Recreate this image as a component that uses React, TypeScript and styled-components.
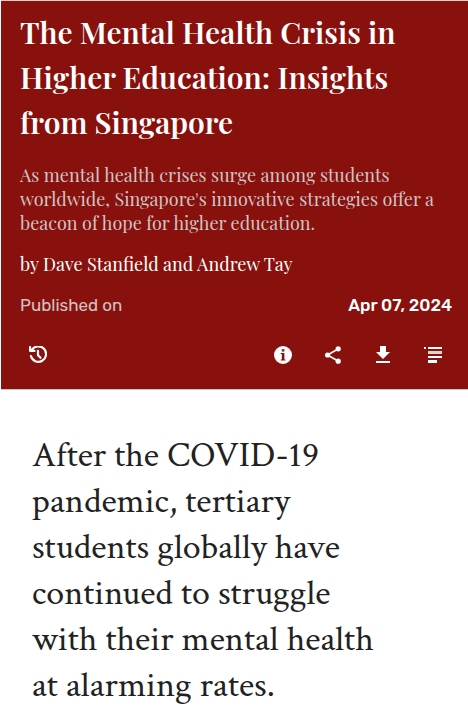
import React from 'react';
import styled, { createGlobalStyle } from 'styled-components';

const GlobalStyle = createGlobalStyle`
  *, *::before, *::after { box-sizing: border-box; }
  body { margin: 0; background: #ffffff; }
`;

const display = `'Playfair Display', 'Liberation Serif', serif`;
const sans = `Rubik, Roboto, sans-serif`;

const Page = styled.main`
  padding-left: 1px;
`;

const Header = styled.header`
  display: flex;
  flex-direction: column;
  padding: 9px 16px 14px 19px;
  border-top: 1px solid #d9d0d0;
  border-bottom: 1px solid #d0c4c4;
  background: #88110d;
  color: #ffffff;
`;

const Title = styled.h1`
  margin: 0;
  font: 600 30px/45px ${display};
`;

const Summary = styled.p`
  margin: 18px 0 0;
  color: #cfc4c4;
  font: 400 18px/24px ${display};
`;

const Byline = styled.p`
  margin: 17px 0 0;
  font: 400 18px/24px ${display};
`;

const Published = styled.div`
  display: flex;
  justify-content: space-between;
  margin-top: 17px;
  font: 400 17px/24px ${sans};
`;

const Label = styled.span`
  color: #cfc4c4;
`;

const PublishDate = styled.time`
  font-weight: 500;
`;

const Toolbar = styled.nav`
  display: flex;
  justify-content: space-between;
  margin: 18px -1px 0 -2px;
`;

const Actions = styled.div`
  display: flex;
  gap: 10px;
`;

const IconButton = styled.button`
  display: grid;
  place-items: center;
  width: 40px;
  height: 40px;
  padding: 0;
  border: 0;
  border-radius: 3px;
  background: transparent;
  color: #ffffff;
  cursor: pointer;
`;

const Icon = styled.svg`
  display: block;
  width: 18px;
  height: 18px;
  fill: currentColor;
`;

const Article = styled.article`
  padding: 43px 31px 0;
`;

const Lead = styled.p`
  margin: 0;
  color: #222222;
  font: 400 36px/46px 'Crimson Text', 'Liberation Serif', serif;
`;

const HistoryIcon = () => (
  <Icon viewBox="0 0 18 18" aria-hidden="true">
    <path d="M2.6 4.4A7.7 7.7 0 1 1 1.9 10" fill="none" stroke="currentColor" strokeWidth="2.2" strokeLinecap="round" />
    <path d="M0 1.2a1.1 1.1 0 0 1 2.2 0v2.6h3.2a1.1 1.1 0 0 1 0 2.3H1.1A1.1 1.1 0 0 1 0 5z" />
    <path d="M9 4.8v4.4l2.5 2.6" fill="none" stroke="currentColor" strokeWidth="2.2" strokeLinecap="round" />
  </Icon>
);

const InfoIcon = () => (
  <Icon viewBox="0 0 18 18" aria-hidden="true">
    <path
      fillRule="evenodd"
      d="M9 0a9 9 0 1 1 0 18A9 9 0 0 1 9 0zM7.8 3.2v2.4h2.6V3.2zM6.7 7v1.1h1.1v5.3H6.7v1.1h4.8v-1.1h-1.1V7z"
    />
  </Icon>
);

const ShareIcon = () => (
  <Icon viewBox="0 0 18 18" aria-hidden="true">
    <path d="M14 3L3.5 9 14 15" fill="none" stroke="currentColor" strokeWidth="1.6" />
    <circle cx="14.2" cy="2.8" r="2.6" />
    <circle cx="3.6" cy="9" r="2.6" />
    <circle cx="14.2" cy="15.2" r="2.6" />
  </Icon>
);

const DownloadIcon = () => (
  <Icon viewBox="0 0 18 18" aria-hidden="true">
    <path d="M6 0h6v6h4L9 13 2 6h4zM2 15h14v2H2z" />
  </Icon>
);

const ContentsIcon = () => (
  <Icon viewBox="0 0 18 18" aria-hidden="true">
    <path d="M0 1h2v2H0zM4 1h14v2H4zM4 10h14v2H4zM4 14h9v3H4z" />
    <path d="M4 5h14v3H4z" opacity="0.8" />
  </Icon>
);

const actions = [
  { label: 'Details', Glyph: InfoIcon },
  { label: 'Share', Glyph: ShareIcon },
  { label: 'Download', Glyph: DownloadIcon },
  { label: 'Contents', Glyph: ContentsIcon },
];

export default function App() {
  return (
    <Page>
      <GlobalStyle />
      <Header>
        <Title>
          The Mental Health Crisis in<br />Higher Education: Insights<br />from Singapore
        </Title>
        <Summary>
          As mental health crises surge among students<br />worldwide, Singapore's innovative strategies offer a<br />beacon of hope for higher education.
        </Summary>
        <Byline>by Dave Stanfield and Andrew Tay</Byline>
        <Published>
          <Label>Published on</Label>
          <PublishDate dateTime="2024-04-07">Apr 07, 2024</PublishDate>
        </Published>
        <Toolbar aria-label="Publication tools">
          <IconButton type="button" aria-label="History"><HistoryIcon /></IconButton>
          <Actions>
            {actions.map(({ label, Glyph }) => (
              <IconButton key={label} type="button" aria-label={label}><Glyph /></IconButton>
            ))}
          </Actions>
        </Toolbar>
      </Header>
      <Article>
        <Lead>
          After the COVID-19<br />pandemic, tertiary<br />students globally have<br />continued to struggle<br />with their mental health<br />at alarming rates.
        </Lead>
      </Article>
    </Page>
  );
}
